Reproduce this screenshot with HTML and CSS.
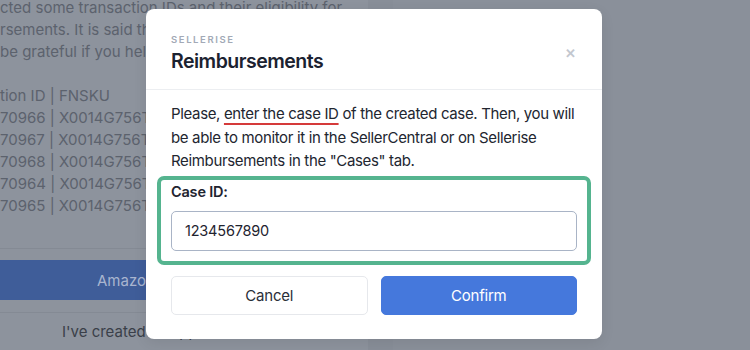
FILE: index.html
```html
<!DOCTYPE html>
<html lang="en">
<head>
<meta charset="utf-8">
<title>Reimbursements</title>
<link rel="stylesheet" href="styles.css">
</head>
<body>
<div class="page">
  <section class="panel">
    <div class="panel-text">
      <p>cted some transaction IDs and their eligibility for</p>
      <p>rsements. It is said the reimbursement should be</p>
      <p>be grateful if you helped me with this case.</p>
      <p>&nbsp;</p>
      <p>tion ID | FNSKU</p>
      <p>70966 | X0014G756T</p>
      <p>70967 | X0014G756T</p>
      <p>70968 | X0014G756T</p>
      <p>70964 | X0014G756T</p>
      <p>70965 | X0014G756T</p>
    </div>
    <div class="panel-foot">
      <div class="amazon-bar"><span>Amazon Seller Central</span></div>
      <div class="created-row"><span>I've created a support case</span></div>
    </div>
  </section>
  <div class="strip"></div>
  <div class="rest"></div>
</div>

<div class="modal">
  <header class="modal-head">
    <div class="head-text">
      <div class="brand">SELLERISE</div>
      <h1 class="title">Reimbursements</h1>
    </div>
    <span class="close">&#x2715;</span>
  </header>
  <div class="modal-body">
    <p class="intro">Please, <span class="mark">enter the case ID</span> of the created case. Then, you will be able to monitor it in the SellerCentral or on Sellerise Reimbursements in the "Cases" tab.</p>
    <div class="highlight">
      <label class="label" for="case">Case ID:</label>
      <input id="case" class="field" type="text" value="1234567890">
    </div>
    <div class="actions">
      <button class="btn btn-cancel">Cancel</button>
      <button class="btn btn-confirm">Confirm</button>
    </div>
  </div>
</div>
</body>
</html>
```

FILE: styles.css
```css
* { box-sizing: border-box; }
html, body { margin: 0; padding: 0; }
body {
  width: 750px;
  height: 350px;
  overflow: hidden;
  background: #8a909a;
  font-family: Inter, "Noto Sans", sans-serif;
  position: relative;
}
.page {
  display: flex;
  height: 350px;
}
.panel {
  width: 368px;
  flex: none;
  background: #8d939d;
  display: flex;
  flex-direction: column;
  overflow: hidden;
}
.panel-text {
  margin-top: -3px;
  font-size: 15px;
  line-height: 22px;
  color: #5c626d;
  white-space: nowrap;
}
.panel-text p { margin: 0; }
.panel-foot {
  margin-top: 31px;
  border-top: 1px solid #848a94;
  padding-top: 11px;
}
.amazon-bar {
  height: 40px;
  background: #3f5d99;
  color: #a9b5cf;
  font-size: 15px;
  display: flex;
  align-items: center;
  padding-left: 97px;
  white-space: nowrap;
}
.created-row {
  margin-top: 12px;
  border-top: 1px solid #848a94;
  height: 38px;
  display: flex;
  align-items: center;
  padding-left: 62px;
  font-size: 15px;
  color: #3a3f49;
  white-space: nowrap;
}
.strip {
  width: 25px;
  flex: none;
  background: #888e98;
}
.rest { flex: 1; background: #8a909a; }

.modal {
  position: absolute;
  left: 146px;
  top: 9px;
  width: 456px;
  height: 330px;
  background: #ffffff;
  border-radius: 8px;
  box-shadow: 0 4px 14px rgba(0, 0, 0, 0.08);
  color: #1f2430;
}
.modal-head {
  display: flex;
  align-items: flex-start;
  justify-content: space-between;
  height: 81px;
  padding: 25px 26px 0 25px;
  border-bottom: 1px solid #eceef1;
}
.brand {
  font-size: 9.5px;
  font-weight: 600;
  letter-spacing: 1.6px;
  color: #a2a9b6;
  line-height: 12px;
}
.title {
  margin: 3px 0 0;
  font-size: 19.5px;
  font-weight: 600;
  line-height: 24px;
  color: #1b2230;
  letter-spacing: -0.5px;
}
.close {
  font-size: 13px;
  line-height: 14px;
  font-weight: 700;
  color: #c3c7cf;
  margin-top: 12px;
}
.modal-body {
  padding: 12px 25px 25px;
}
.intro {
  margin: 0;
  font-size: 15px;
  line-height: 23.5px;
  letter-spacing: -0.35px;
  color: #222630;
}
.mark {
  text-decoration: underline;
  text-decoration-color: #d53a3a;
  text-decoration-thickness: 2px;
  text-underline-offset: 4px;
}
.highlight {
  margin: 3px -14px 0;
  border: 4px solid #55b48f;
  border-radius: 7px;
  padding: 4px 10px 10px;
  display: flex;
  flex-direction: column;
}
.label {
  font-size: 14.5px;
  font-weight: 600;
  line-height: 16px;
  letter-spacing: -0.2px;
  color: #1f2430;
}
.field {
  margin-top: 11px;
  height: 40px;
  border: 1px solid #a9b4c6;
  border-radius: 5px;
  padding: 0 13px;
  font-family: inherit;
  font-size: 14.5px;
  letter-spacing: -0.2px;
  color: #1f2430;
  outline: none;
}
.actions {
  margin-top: 11px;
  display: grid;
  grid-template-columns: 1fr 1fr;
  gap: 13px;
}
.btn {
  height: 39px;
  border-radius: 5px;
  font-family: inherit;
  font-size: 15px;
  letter-spacing: -0.2px;
}
.btn-cancel {
  background: #ffffff;
  border: 1px solid #e6e8ec;
  color: #2a2f39;
}
.btn-confirm {
  background: #4578dc;
  border: 1px solid #4578dc;
  color: #ffffff;
}
```
